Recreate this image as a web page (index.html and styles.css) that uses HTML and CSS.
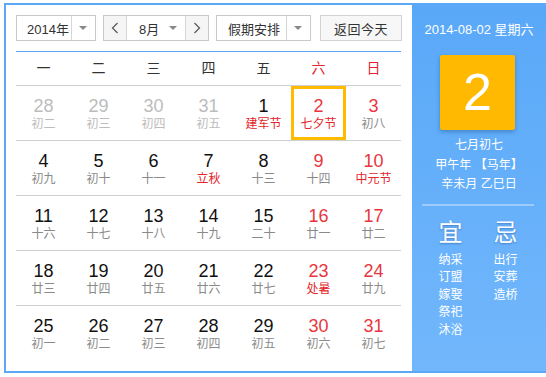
FILE: index.html
```html
<!DOCTYPE html>
<html lang="zh">
<head>
<meta charset="utf-8">
<link rel="stylesheet" href="styles.css">
</head>
<body>
<div class="cal">
  <div class="main">
    <div class="controls">
      <div class="select year"><span class="label">2014年</span><span class="arrow"></span></div>
      <div class="month-group">
        <button class="nav"><svg width="8" height="12" viewBox="0 0 8 12"><polyline points="6.5,1 1.5,6 6.5,11" fill="none" stroke="#555" stroke-width="1.2"/></svg></button>
        <div class="select month"><span class="label">8月</span><span class="arrow"></span></div>
        <button class="nav"><svg width="8" height="12" viewBox="0 0 8 12"><polyline points="1.5,1 6.5,6 1.5,11" fill="none" stroke="#555" stroke-width="1.2"/></svg></button>
      </div>
      <div class="select holiday"><span class="label">假期安排</span><span class="arrow"></span></div>
      <button class="today">返回今天</button>
    </div>
    <div class="grid">
      <div class="wk">一</div><div class="wk">二</div><div class="wk">三</div><div class="wk">四</div><div class="wk">五</div><div class="wk red">六</div><div class="wk red">日</div>

      <div class="day other"><b>28</b><i>初二</i></div>
      <div class="day other"><b>29</b><i>初三</i></div>
      <div class="day other"><b>30</b><i>初四</i></div>
      <div class="day other"><b>31</b><i>初五</i></div>
      <div class="day"><b>1</b><i class="fest">建军节</i></div>
      <div class="day wkend selected"><b>2</b><i class="fest">七夕节</i></div>
      <div class="day wkend"><b>3</b><i>初八</i></div>

      <div class="day"><b>4</b><i>初九</i></div>
      <div class="day"><b>5</b><i>初十</i></div>
      <div class="day"><b>6</b><i>十一</i></div>
      <div class="day"><b>7</b><i class="fest">立秋</i></div>
      <div class="day"><b>8</b><i>十三</i></div>
      <div class="day wkend"><b>9</b><i>十四</i></div>
      <div class="day wkend"><b>10</b><i class="fest">中元节</i></div>

      <div class="day"><b>11</b><i>十六</i></div>
      <div class="day"><b>12</b><i>十七</i></div>
      <div class="day"><b>13</b><i>十八</i></div>
      <div class="day"><b>14</b><i>十九</i></div>
      <div class="day"><b>15</b><i>二十</i></div>
      <div class="day wkend"><b>16</b><i>廿一</i></div>
      <div class="day wkend"><b>17</b><i>廿二</i></div>

      <div class="day"><b>18</b><i>廿三</i></div>
      <div class="day"><b>19</b><i>廿四</i></div>
      <div class="day"><b>20</b><i>廿五</i></div>
      <div class="day"><b>21</b><i>廿六</i></div>
      <div class="day"><b>22</b><i>廿七</i></div>
      <div class="day wkend"><b>23</b><i class="fest">处暑</i></div>
      <div class="day wkend"><b>24</b><i>廿九</i></div>

      <div class="day last"><b>25</b><i>初一</i></div>
      <div class="day last"><b>26</b><i>初二</i></div>
      <div class="day last"><b>27</b><i>初三</i></div>
      <div class="day last"><b>28</b><i>初四</i></div>
      <div class="day last"><b>29</b><i>初五</i></div>
      <div class="day last wkend"><b>30</b><i>初六</i></div>
      <div class="day last wkend"><b>31</b><i>初七</i></div>
    </div>
  </div>
  <div class="side">
    <div class="date">2014-08-02 星期六</div>
    <div class="big">2</div>
    <div class="lunar">
      <div>七月初七</div>
      <div>甲午年 【马年】</div>
      <div>辛未月 乙巳日</div>
    </div>
    <div class="sep"></div>
    <div class="yiji">
      <div class="col">
        <div class="head">宜</div>
        <div>纳采</div><div>订盟</div><div>嫁娶</div><div>祭祀</div><div>沐浴</div>
      </div>
      <div class="col">
        <div class="head">忌</div>
        <div>出行</div><div>安葬</div><div>造桥</div>
      </div>
    </div>
  </div>
</div>
</body>
</html>
```

FILE: styles.css
```css
* { box-sizing: border-box; }
html, body { margin: 0; padding: 0; background: #fff; }
body {
  font-family: "Liberation Sans", "Noto Sans CJK SC", sans-serif;
  color: #333;
}
.cal {
  margin: 3px 0 0 4px;
  width: 542px;
  height: 370px;
  border: 2px solid #5ba8f6;
  border-right: 0;
  display: flex;
}
.main {
  width: 406px;
  padding: 10px 11px 0 10px;
}
.controls {
  display: flex;
  height: 26px;
  margin-bottom: 10px;
}
.select {
  height: 26px;
  border: 1px solid #c9c9c9;
  display: flex;
  align-items: center;
  font-size: 13px;
  color: #333;
  background: #fff;
  flex: none;
}
.select .label { flex: 1; padding-left: 10px; white-space: nowrap; }
.select .arrow {
  flex: none;
  width: 24px;
  height: 24px;
  border-left: 1px solid #d6d6d6;
  position: relative;
}
.select .arrow::after {
  content: "";
  position: absolute;
  left: 7px;
  top: 10px;
  border-left: 4px solid transparent;
  border-right: 4px solid transparent;
  border-top: 4px solid #888;
}
.year { width: 80px; }
.month-group {
  margin-left: 7px;
  display: flex;
  border: 1px solid #c9c9c9;
  height: 26px;
  flex: none;
}
.month-group .select { border: 0; height: 24px; width: 60px; border-left: 1px solid #d6d6d6; border-right: 1px solid #d6d6d6; }
.month-group .select .label { padding-left: 12px; }
.month-group .select .arrow { border-left: 0; }
.month-group .select .arrow::after { left: 8px; }
.nav {
  flex: none;
  width: 22px;
  height: 24px;
  padding: 0;
  border: 0;
  background: #f5f5f5;
  display: flex;
  align-items: center;
  justify-content: center;
}
.holiday { width: 95px; margin-left: 7px; }
.holiday .label { padding-left: 11px; }
.today {
  flex: none;
  margin-left: 9px;
  width: 82px;
  height: 26px;
  border: 1px solid #d3d3d3;
  background: #f7f7f7;
  font: inherit;
  font-size: 13px;
  color: #333;
  padding: 0;
  letter-spacing: 0.5px;
}
.grid {
  border-top: 1px solid #5ba8f6;
  display: grid;
  grid-template-columns: repeat(7, 55px);
}
.wk {
  height: 34px;
  border-bottom: 1px solid #cfcfcf;
  text-align: center;
  line-height: 33px;
  font-size: 14px;
  color: #333;
}
.red { color: #e3262b; }
.day {
  height: 55px;
  border-bottom: 1px solid #cfcfcf;
  text-align: center;
  padding-top: 10px;
}
.day.last { border-bottom: 0; }
.day b {
  display: block;
  font-weight: normal;
  font-size: 18px;
  line-height: 20px;
  color: #111;
}
.day i {
  display: block;
  font-style: normal;
  font-size: 12px;
  line-height: 17px;
  color: #8a8a8a;
}
.day.wkend b { color: #e9363e; }
.day i.fest { color: #e3262b; }
.day.other b, .day.other i { color: #bcbcbc; }
.day.selected { box-shadow: inset 0 0 0 3px #ffbb00; height: 54px; margin-bottom: 1px; border-bottom: 0; }
.day.selected { position: relative; }
.day.selected::after {
  content: "";
  position: absolute;
  left: -1px; right: 0; bottom: -1px;
  border-bottom: 1px solid #cfcfcf;
}
.side {
  width: 134px;
  background: linear-gradient(to bottom, #59a8f8, #72b7fc);
  color: #fff;
  text-align: center;
  padding-top: 17px;
}
.date { font-size: 13px; line-height: 16px; }
.big {
  width: 75px;
  height: 75px;
  margin: 17px auto 0 28px;
  background: #ffb900;
  border-radius: 2px;
  box-shadow: 0 2px 4px rgba(0, 40, 100, 0.3);
  font-size: 52px;
  line-height: 75px;
  color: #fff;
}
.lunar { margin-top: 6px; font-size: 12px; line-height: 19.5px; }
.sep {
  margin: 9px 12px 0 10px;
  height: 2px;
  background: rgba(255, 255, 255, 0.35);
}
.yiji {
  display: grid;
  grid-template-columns: 55px 55px;
  padding-left: 11px;
  margin-top: 12px;
}
.col { font-size: 12px; line-height: 17.5px; }
.col .head {
  font-size: 24px;
  line-height: 30px;
  margin-bottom: 4px;
  text-shadow: 0 1px 2px rgba(0, 40, 100, 0.35);
}
```
